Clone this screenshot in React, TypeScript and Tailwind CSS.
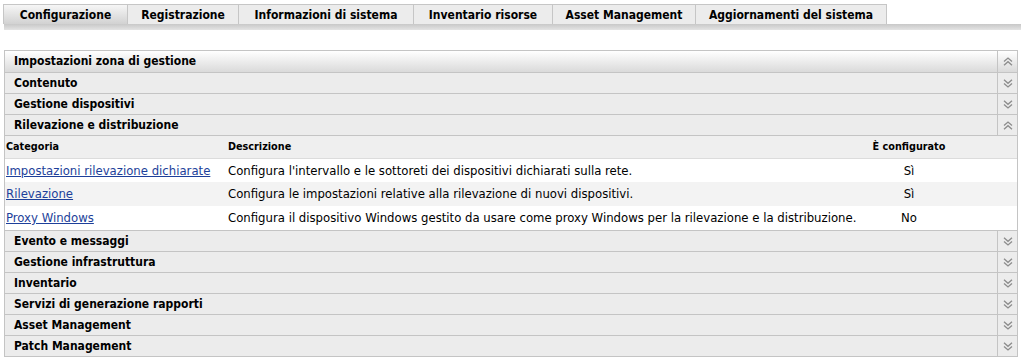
import React from "react";

const tabs = [
  { label: "Configurazione", w: "w-[125px]", active: true },
  { label: "Registrazione", w: "w-[112px]" },
  { label: "Informazioni di sistema", w: "w-[176px]" },
  { label: "Inventario risorse", w: "w-[140px]" },
  { label: "Asset Management", w: "w-[144px]" },
  { label: "Aggiornamenti del sistema", w: "w-[192px]" },
];

const rows = [
  {
    cat: "Impostazioni rilevazione dichiarate",
    desc: "Configura l'intervallo e le sottoreti dei dispositivi dichiarati sulla rete.",
    conf: "Sì",
  },
  {
    cat: "Rilevazione",
    desc: "Configura le impostazioni relative alla rilevazione di nuovi dispositivi.",
    conf: "Sì",
  },
  {
    cat: "Proxy Windows",
    desc: "Configura il dispositivo Windows gestito da usare come proxy Windows per la rilevazione e la distribuzione.",
    conf: "No",
  },
];

const bottomSections = [
  "Evento e messaggi",
  "Gestione infrastruttura",
  "Inventario",
  "Servizi di generazione rapporti",
  "Asset Management",
  "Patch Management",
];

function Chevrons({ up }: { up?: boolean }) {
  return (
    <svg width="10" height="9" viewBox="0 0 10 9" className={up ? "" : "rotate-180"}>
      <path d="M1 4.5 L5 1 L9 4.5" fill="none" stroke="#8c8c8c" strokeWidth="1.3" />
      <path d="M1 8.2 L5 4.7 L9 8.2" fill="none" stroke="#8c8c8c" strokeWidth="1.3" />
    </svg>
  );
}

function Section({ title, up, first }: { title: string; up?: boolean; first?: boolean }) {
  return (
    <div
      className={
        first
          ? "flex h-[21px] bg-linear-to-b from-white to-[#dadada]"
          : "flex h-[21px] border-t border-[#c4c4c4] bg-[#ececec]"
      }
    >
      <div className="flex-1 pl-[9px] text-[12px] font-bold leading-[20px] text-black">{title}</div>
      <div className="flex w-[20px] items-center justify-center border-l border-[#c4c4c4]">
        <Chevrons up={up} />
      </div>
    </div>
  );
}

export default function App() {
  return (
    <div className="h-[358px] w-[1021px] overflow-hidden bg-white font-['DejaVu_Sans_Condensed','DejaVu_Sans',sans-serif] font-stretch-condensed text-black">
      {/* Tabs */}
      <div className="flex pl-[3px] pt-[4px]">
        {tabs.map((t) => (
          <div
            key={t.label}
            className={`${t.w} -ml-px first:ml-0 flex h-[20px] items-center justify-center border border-b-0 border-[#c6c6c6] text-[12px] font-bold ${
              t.active ? "bg-linear-to-b from-[#f6f6f6] to-[#d2d2d2]" : "bg-[#ececec]"
            }`}
          >
            {t.label}
          </div>
        ))}
      </div>
      <div className="ml-[4px] h-[6px] bg-linear-to-b from-[#c8c8c8] to-[#e4e4e4]" />

      {/* Accordion */}
      <div className="ml-[4px] mt-[20px] w-[1014px] border border-[#c4c4c4]">
        <Section title="Impostazioni zona di gestione" up first />
        <Section title="Contenuto" />
        <Section title="Gestione dispositivi" />
        <Section title="Rilevazione e distribuzione" up />

        <div className="flex h-[23px] items-center border-t border-[#c4c4c4] bg-[#efefef] text-[10.75px] font-bold">
          <div className="w-[223px] pl-[1px]">Categoria</div>
          <div className="w-[631px]">Descrizione</div>
          <div className="w-[100px] text-center">È configurato</div>
        </div>
        {rows.map((r, i) => (
          <div
            key={r.cat}
            className={`flex h-[24px] items-center text-[13px] ${i === 0 ? "border-t border-[#dcdcdc]" : ""} ${
              i % 2 === 1 ? "bg-[#f3f3f3]" : "bg-white"
            }`}
          >
            <div className="w-[223px] pl-[1px]">
              <a href="#" className="text-[#1d3f9a] underline">
                {r.cat}
              </a>
            </div>
            <div className="w-[631px] whitespace-nowrap">{r.desc}</div>
            <div className="w-[100px] text-center">{r.conf}</div>
          </div>
        ))}

        {bottomSections.map((s) => (
          <Section key={s} title={s} />
        ))}
      </div>
    </div>
  );
}
